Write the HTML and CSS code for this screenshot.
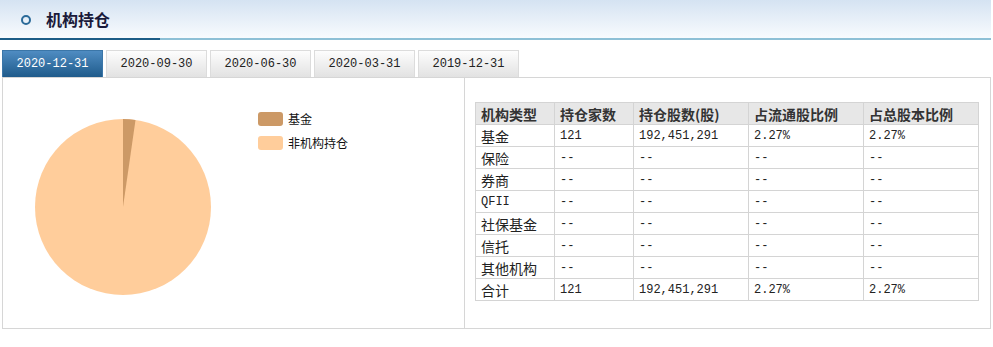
FILE: index.html
```html
<!DOCTYPE html>
<html lang="zh-CN">
<head>
  <meta charset="UTF-8" />
  <title>机构持仓</title>
  <link rel="stylesheet" href="styles.css">
</head>
<body>

  <div class="head">
    <span class="ring"></span>
    <h1>机构持仓</h1>
  </div>

  <div class="tabs">
    <button class="tab active">2020-12-31</button>
    <button class="tab">2020-09-30</button>
    <button class="tab">2020-06-30</button>
    <button class="tab">2020-03-31</button>
    <button class="tab">2019-12-31</button>
  </div>

  <div class="box">
    <div class="chart">
      <svg width="461" height="248" viewBox="0 0 461 248">
        <circle cx="120" cy="129" r="88" fill="#ffcd9b" />
        <path d="M120 129 L120 41 A88 88 0 0 1 132.5 41.9 Z" fill="#cc9966" />
        <rect x="255" y="34" width="25" height="14" rx="3" fill="#cc9966" />
        <text x="285" y="46" class="legend">基金</text>
        <rect x="255" y="58" width="25" height="14" rx="3" fill="#ffcd9b" />
        <text x="285" y="70" class="legend">非机构持仓</text>
      </svg>
    </div>

    <div class="data">
      <table>
        <tr><th>机构类型</th><th>持仓家数</th><th class="wide">持仓股数(股)</th><th class="wide">占流通股比例</th><th class="wide">占总股本比例</th></tr>
        <tr><td>基金</td><td class="num">121</td><td class="num">192,451,291</td><td class="num">2.27%</td><td class="num">2.27%</td></tr>
        <tr><td>保险</td><td class="num">--</td><td class="num">--</td><td class="num">--</td><td class="num">--</td></tr>
        <tr><td>券商</td><td class="num">--</td><td class="num">--</td><td class="num">--</td><td class="num">--</td></tr>
        <tr><td class="num">QFII</td><td class="num">--</td><td class="num">--</td><td class="num">--</td><td class="num">--</td></tr>
        <tr><td>社保基金</td><td class="num">--</td><td class="num">--</td><td class="num">--</td><td class="num">--</td></tr>
        <tr><td>信托</td><td class="num">--</td><td class="num">--</td><td class="num">--</td><td class="num">--</td></tr>
        <tr><td>其他机构</td><td class="num">--</td><td class="num">--</td><td class="num">--</td><td class="num">--</td></tr>
        <tr><td>合计</td><td class="num">121</td><td class="num">192,451,291</td><td class="num">2.27%</td><td class="num">2.27%</td></tr>
      </table>
    </div>
  </div>

</body>
</html>
```

FILE: styles.css
```css
body { margin: 0; font-family: "Noto Sans CJK SC", "Liberation Sans", sans-serif; color: #222; background: #fff; }

.head {
  height: 38px;
  display: flex;
  align-items: center;
  padding-left: 21px;
  background: linear-gradient(#d5e3f2, #f8fbfe);
  border-bottom: 2px solid #8ec0d6;
  position: relative;
  margin-right: 2px;
}
.head::after {
  content: "";
  position: absolute;
  left: 0;
  bottom: -2px;
  width: 160px;
  height: 2px;
  background: #1c5d87;
}
.ring {
  width: 6px;
  height: 6px;
  border: 2px solid #2a6a99;
  border-radius: 50%;
  margin-right: 15px;
  margin-top: 2px;
}
.head h1 {
  margin: 0;
  font-size: 16px;
  font-weight: bold;
  color: #1a1a3a;
}

.tabs {
  display: flex;
  gap: 3px;
  margin: 10px 0 0 2px;
}
button.tab {
  width: 101px;
  height: 27px;
  padding: 0;
  font-family: "Liberation Mono", monospace;
  font-size: 12px;
  color: #222;
  background: linear-gradient(#fdfdfd, #e2e2e2);
  border: 1px solid #dcdcdc;
  border-bottom: none;
  cursor: pointer;
}
button.tab.active {
  color: #fff;
  background: linear-gradient(#4f8cc2, #1f5b8b);
  border-color: #3b76a8;
}

.box {
  display: flex;
  margin-left: 2px;
  width: 987px;
  height: 250px;
  border: 1px solid #d6d6d6;
}
.chart {
  width: 461px;
  border-right: 1px solid #d6d6d6;
}
.legend { font-size: 12px; fill: #111; }

.data { padding: 24px 0 0 10px; }
table {
  border-collapse: collapse;
  font-size: 14px;
}
th, td {
  border: 1px solid #d4d4d4;
  height: 21px;
  padding: 0 5px;
  text-align: left;
  width: 68px;
  white-space: nowrap;
  line-height: 20px;
}
th {
  background: #e7e7e7;
  font-weight: bold;
  color: #333;
}
th.wide { width: 104px; }
td.num { font-family: "Liberation Mono", monospace; font-size: 12px; }
```
